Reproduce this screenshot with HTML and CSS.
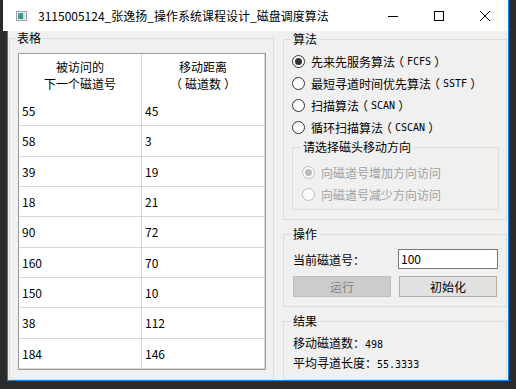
FILE: index.html
```html
<!DOCTYPE html>
<html>

<head>
    <meta charset="utf-8">
    <link rel="stylesheet" href="styles.css">
</head>

<body>
    <div class="window">
        <div class="titlebar">
            <svg class="app-icon" width="11" height="10" viewBox="0 0 11 10">
                <defs>
                    <linearGradient id="g" x1="0" y1="0" x2="1" y2="1">
                        <stop offset="0" stop-color="#5fa3a8"/>
                        <stop offset="1" stop-color="#2f7f6f"/>
                    </linearGradient>
                </defs>
                <rect x="0.5" y="0.5" width="10" height="9" fill="#eef2f2" stroke="#9aa0a0"/>
                <rect x="2" y="2" width="5" height="6" fill="url(#g)"/>
                <rect x="7" y="2" width="2" height="6" fill="#d8e4e4"/>
            </svg>
            <span class="title">3115005124_张逸扬_操作系统课程设计_磁盘调度算法</span>
            <div class="caption-btns">
                <span class="cap-btn">
                    <svg width="10" height="10" viewBox="0 0 10 10"><path d="M0 5.5H10" stroke="#000" stroke-width="1"/></svg>
                </span>
                <span class="cap-btn">
                    <svg width="10" height="10" viewBox="0 0 10 10"><rect x="0.5" y="0.5" width="9" height="9" fill="none" stroke="#000"/></svg>
                </span>
                <span class="cap-btn">
                    <svg width="10" height="10" viewBox="0 0 10 10"><path d="M0 0L10 10M10 0L0 10" stroke="#000" stroke-width="1"/></svg>
                </span>
            </div>
        </div>

        <div class="client">
            <fieldset class="group group-table">
                <legend>表格</legend>
                <div class="grid">
                    <div class="cell head">被访问的<br>下一个磁道号</div>
                    <div class="cell head">移动距离<br><span class="br">（</span>磁道数<span class="br">）</span></div>
                    <div class="cell">55</div><div class="cell">45</div>
                    <div class="cell">58</div><div class="cell">3</div>
                    <div class="cell">39</div><div class="cell">19</div>
                    <div class="cell">18</div><div class="cell">21</div>
                    <div class="cell">90</div><div class="cell">72</div>
                    <div class="cell">160</div><div class="cell">70</div>
                    <div class="cell">150</div><div class="cell">10</div>
                    <div class="cell">38</div><div class="cell">112</div>
                    <div class="cell">184</div><div class="cell">146</div>
                </div>
            </fieldset>

            <div class="side">
                <fieldset class="group algo">
                    <legend>算法</legend>
                    <div class="opt"><span class="radio on"></span>先来先服务算法<span class="br">（</span><span class="mono">FCFS</span><span class="br">）</span></div>
                    <div class="opt"><span class="radio"></span>最短寻道时间优先算法<span class="br">（</span><span class="mono">SSTF</span><span class="br">）</span></div>
                    <div class="opt"><span class="radio"></span>扫描算法<span class="br">（</span><span class="mono">SCAN</span><span class="br">）</span></div>
                    <div class="opt"><span class="radio"></span>循环扫描算法<span class="br">（</span><span class="mono">CSCAN</span><span class="br">）</span></div>

                    <fieldset class="group direction">
                        <legend>请选择磁头移动方向</legend>
                        <div class="opt disabled"><span class="radio on"></span>向磁道号增加方向访问</div>
                        <div class="opt disabled"><span class="radio"></span>向磁道号减少方向访问</div>
                    </fieldset>
                </fieldset>

                <fieldset class="group ops">
                    <legend>操作</legend>
                    <div class="field-row">
                        <span class="field-label">当前磁道号：</span>
                        <span class="input">100</span>
                    </div>
                    <div class="btn-row">
                        <span class="btn disabled">运行</span>
                        <span class="btn">初始化</span>
                    </div>
                </fieldset>

                <fieldset class="group result">
                    <legend>结果</legend>
                    <div class="line">移动磁道数：<span class="mono">498</span></div>
                    <div class="line">平均寻道长度：<span class="mono">55.3333</span></div>
                </fieldset>
            </div>
        </div>
    </div>
</body>

</html>
```

FILE: styles.css
```css
* {
    box-sizing: border-box;
}

body {
    margin: 0;
    width: 516px;
    height: 389px;
    overflow: hidden;
    background: #2b2b2d;
    font-family: "Noto Sans CJK SC", sans-serif;
    font-size: 12px;
    color: #000;
}

.window {
    margin-left: 3px;
    width: 506px;
}

.titlebar {
    height: 31px;
    background: #fff;
    border-right: 1px solid #1883d7;
    display: flex;
    align-items: center;
    padding-left: 13px;
}

.app-icon {
    flex: none;
}

.title {
    flex: 1;
    margin-left: 11px;
    line-height: 16px;
    white-space: nowrap;
}

.caption-btns {
    display: flex;
    height: 100%;
}

.cap-btn {
    width: 46px;
    display: flex;
    align-items: center;
    justify-content: center;
}

.client {
    margin-left: 4px;
    height: 350px;
    background: #f0f0f0;
    border: 1px solid #1883d7;
    border-top: none;
    padding-left: 1px;
    display: flex;
    gap: 9px;
}

/* group boxes */
.group {
    margin: 0;
    border: 1px solid #dcdcdc;
    padding: 0 7px 0 8px;
    min-width: 0;
}

.group legend {
    padding: 0 2px;
    margin-left: -1px;
    line-height: 14px;
}

.group-table {
    width: 265px;
    padding-top: 8px;
    padding-bottom: 8px;
}

.group-table legend {
    margin-left: -3px;
}

.side {
    width: 224px;
    padding-top: 1px;
    display: flex;
    flex-direction: column;
    gap: 7px;
}

/* table */
.grid {
    width: 248px;
    height: 317px;
    background: #fff;
    border: 1px solid #9b9b9b;
    display: grid;
    grid-template-columns: 123px 1fr;
    grid-template-rows: 42px repeat(9, 1fr);
}

.cell {
    border-right: 1px solid #d8d8d8;
    border-bottom: 1px solid #d8d8d8;
    padding-left: 3px;
    display: flex;
    align-items: center;
}

.cell.head {
    display: block;
    border-bottom: none;
    text-align: center;
    line-height: 17px;
    padding: 4px 0 0;
}

/* brackets: half-width glyph centred in a full em, as YaHei draws them */
.br {
    font-feature-settings: "halt" 1;
    padding: 0 3px;
}

/* radios */
.algo {
    padding-top: 4px;
    padding-bottom: 9px;
}

.opt {
    height: 22px;
    display: flex;
    align-items: center;
    white-space: nowrap;
}

.radio {
    flex: none;
    width: 13px;
    height: 13px;
    margin-right: 6px;
    border: 1px solid #333;
    border-radius: 50%;
    background: #fff;
    display: flex;
    align-items: center;
    justify-content: center;
}

.radio.on::after {
    content: "";
    width: 7px;
    height: 7px;
    border-radius: 50%;
    background: #333;
}

.opt.disabled {
    color: #a0a0a0;
}

.opt.disabled .radio {
    border-color: #bcbcbc;
    background: #fcfcfc;
}

.opt.disabled .radio.on::after {
    background: #bcbcbc;
}

.mono {
    font-family: "DejaVu Sans Mono", monospace;
    font-size: 10px;
}

.direction {
    margin-top: 2px;
    padding: 7px 0 4px 9px;
}

/* operations */
.ops {
    padding-top: 8px;
    padding-bottom: 9px;
}

.field-row {
    display: flex;
    align-items: center;
    height: 20px;
    padding-left: 1px;
}

.field-label {
    width: 105px;
}

.input {
    width: 100px;
    height: 20px;
    background: #fff;
    border: 1px solid #7a7a7a;
    padding-left: 2px;
    line-height: 18px;
}

.btn-row {
    margin-top: 7px;
    display: flex;
    gap: 8px;
    padding-left: 1px;
}

.btn {
    width: 98px;
    height: 21px;
    background: #e1e1e1;
    border: 1px solid #adadad;
    display: flex;
    align-items: center;
    justify-content: center;
}

.btn.disabled {
    background: #cccccc;
    border-color: #bfbfbf;
    color: #838383;
}

/* result */
.result {
    padding-top: 5px;
    padding-bottom: 6px;
}

.line {
    height: 20px;
    line-height: 20px;
    padding-left: 1px;
    white-space: nowrap;
}
```
